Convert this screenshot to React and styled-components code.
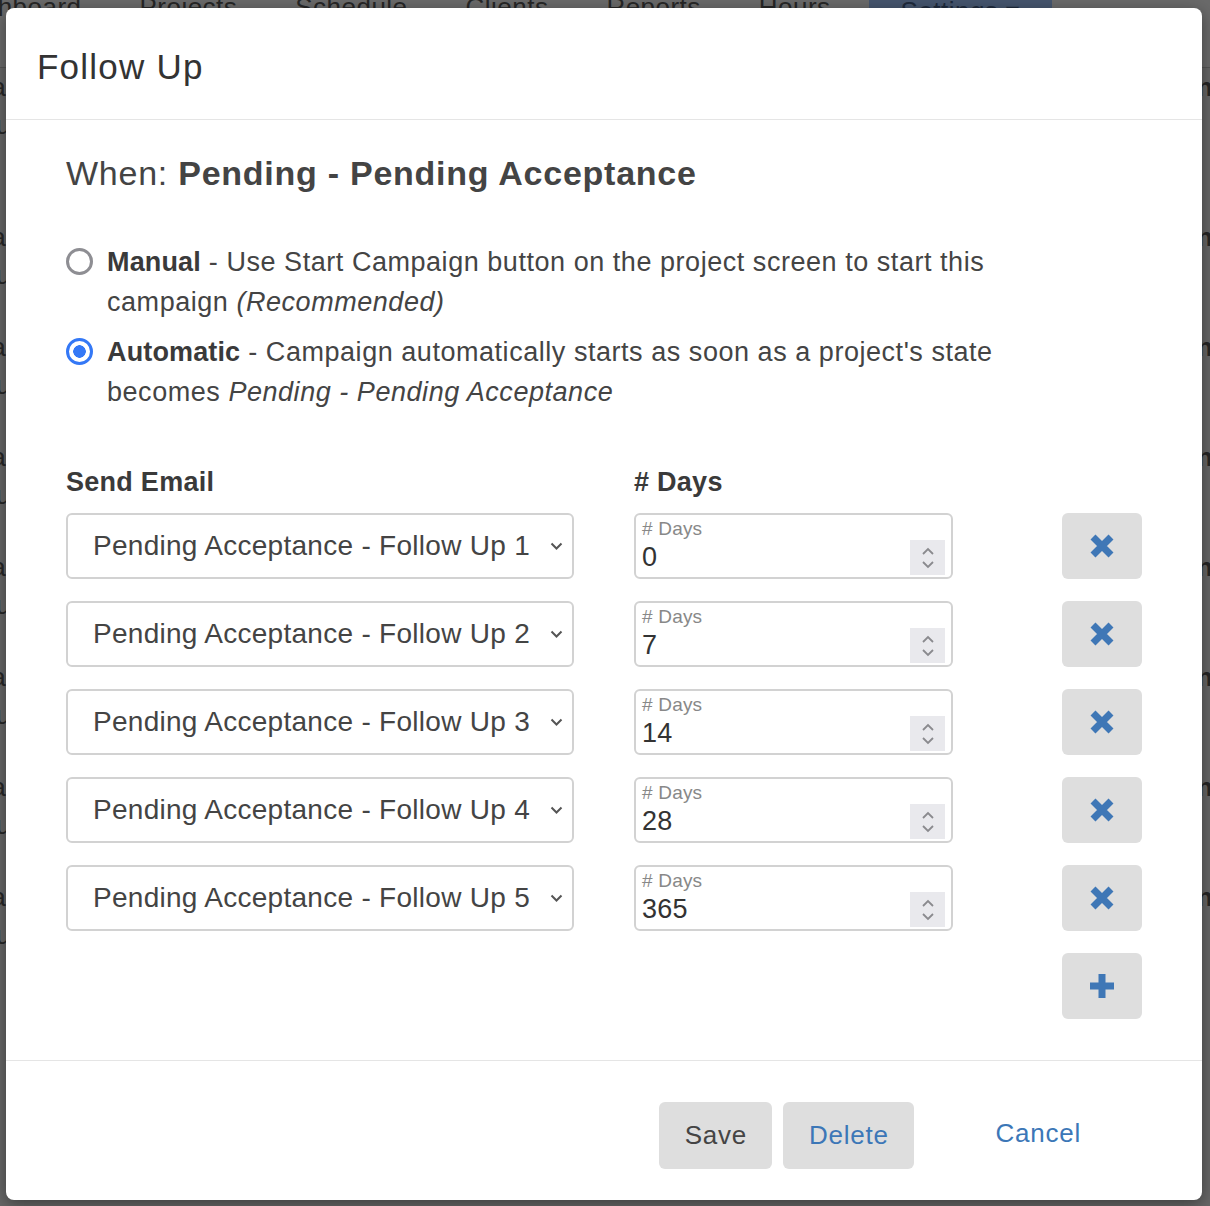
import React, { useState } from "react";
import styled, { createGlobalStyle } from "styled-components";

const GlobalStyle = createGlobalStyle`
	* { box-sizing: border-box; }
	body {
		margin: 0;
		font-family: "Liberation Sans", Arial, sans-serif;
		letter-spacing: 0.03em;
		background: #666;
		color: #444;
	}
`;

const steps = [
	{ id: 1, days: "0" },
	{ id: 2, days: "7" },
	{ id: 3, days: "14" },
	{ id: 4, days: "28" },
	{ id: 5, days: "365" },
];

const navItems = ["Dashboard", "Projects", "Schedule", "Clients", "Reports", "Hours"];

const ChevronDown = () => (
	<svg width="13" height="8" viewBox="0 0 13 8">
		<polyline points="1.5,1.5 6.5,6.5 11.5,1.5" fill="none" stroke="#555" strokeWidth="2" />
	</svg>
);

const TimesIcon = () => (
	<svg width="26" height="26" viewBox="0 0 26 26">
		<path d="M4 4 L22 22 M22 4 L4 22" stroke="#3f77b6" strokeWidth="7" />
	</svg>
);

const PlusIcon = () => (
	<svg width="28" height="28" viewBox="0 0 28 28">
		<path d="M14 2 V26 M2 14 H26" stroke="#3f77b6" strokeWidth="7" />
	</svg>
);

const App = () => {
	const [mode, setMode] = useState("automatic");

	return (
		<>
			<GlobalStyle />
			<Page>
				<Backdrop>
					<Nav>
						{navItems.map((item) => (
							<NavItem key={item}>{item}</NavItem>
						))}
						<NavActive>Settings ▾</NavActive>
					</Nav>
					{[0, 1, 2, 3, 4, 5, 6, 7].map((i) => (
						<BackRow key={i}>
							<BackLeft>
								<span>Campaign</span>
								<span>Schedule</span>
							</BackLeft>
							<BackRight>Pending</BackRight>
						</BackRow>
					))}
				</Backdrop>

				<Modal>
					<Header>
						<Title>Follow Up</Title>
					</Header>

					<Body>
						<When>
							When: <strong>Pending - Pending Acceptance</strong>
						</When>

						<Options>
							<Option onClick={() => setMode("manual")}>
								<Radio $checked={mode === "manual"} />
								<OptionText>
									<b>Manual</b> - Use Start Campaign button on the project screen
									to start this campaign <i>(Recommended)</i>
								</OptionText>
							</Option>
							<Option onClick={() => setMode("automatic")}>
								<Radio $checked={mode === "automatic"} />
								<OptionText>
									<b>Automatic</b> - Campaign automatically starts as soon as a
									project's state becomes <i>Pending - Pending Acceptance</i>
								</OptionText>
							</Option>
						</Options>

						<Labels>
							<span>Send Email</span>
							<span># Days</span>
						</Labels>

						<Rows>
							{steps.map((step) => (
								<React.Fragment key={step.id}>
									<Select>
										<span>Pending Acceptance - Follow Up {step.id}</span>
										<ChevronDown />
									</Select>
									<NumberField>
										<small># Days</small>
										<span>{step.days}</span>
										<Spinner>
											<svg width="14" height="26" viewBox="0 0 14 26">
												<polyline points="2,9 7,4 12,9" fill="none" stroke="#8a8a8e" strokeWidth="1.8" />
												<polyline points="2,17 7,22 12,17" fill="none" stroke="#8a8a8e" strokeWidth="1.8" />
											</svg>
										</Spinner>
									</NumberField>
									<IconButton type="button">
										<TimesIcon />
									</IconButton>
								</React.Fragment>
							))}
							<IconButton type="button" $col={3}>
								<PlusIcon />
							</IconButton>
						</Rows>
					</Body>

					<Footer>
						<Button type="button">Save</Button>
						<Button type="button" $blue $w={131}>
							Delete
						</Button>
						<LinkButton type="button">Cancel</LinkButton>
					</Footer>
				</Modal>
			</Page>
		</>
	);
};

const Page = styled.div`
	position: relative;
	width: 1210px;
	height: 1206px;
	overflow: hidden;
	background: #666;
`;

const Backdrop = styled.div`
	display: flex;
	flex-direction: column;
	color: #262626;
	font-size: 26px;
`;

const Nav = styled.nav`
	height: 68px;
	display: flex;
	align-items: flex-start;
	gap: 58px;
	margin-left: -50px;
	border-bottom: 1px solid #555;
	background: #6a6a6a;
`;

const NavItem = styled.span`
	margin-top: -8px;
	line-height: 30px;
`;

const NavActive = styled.span`
	margin-top: -8px;
	margin-left: -20px;
	padding: 0 32px;
	line-height: 38px;
	background: #45556e;
	color: #1e2a3c;
`;

const BackRow = styled.div`
	display: flex;
	justify-content: space-between;
	padding-top: 40px;
	height: 110px;
	margin: 0 -60px 0 -80px;
	&:first-of-type {
		padding-top: 0;
	}
`;

const BackLeft = styled.div`
	display: flex;
	flex-direction: column;
	line-height: 38px;
`;

const BackRight = styled.div`
	font-weight: 700;
	line-height: 38px;
`;

const Modal = styled.div`
	position: absolute;
	top: 8px;
	left: 6px;
	width: 1196px;
	display: flex;
	flex-direction: column;
	background: #fff;
	border-radius: 8px;
	box-shadow: 0 4px 16px rgba(0, 0, 0, 0.4);
`;

const Header = styled.header`
	height: 112px;
	display: flex;
	align-items: center;
	padding: 0 31px;
	border-bottom: 1px solid #e5e5e5;
`;

const Title = styled.h1`
	margin: 6px 0 0;
	font-size: 35px;
	font-weight: 400;
	letter-spacing: 0.035em;
	color: #333;
`;

const Body = styled.section`
	padding: 33px 60px 41px;
`;

const When = styled.h2`
	margin: 0;
	font-size: 34px;
	line-height: 40px;
	font-weight: 400;
	letter-spacing: 0.022em;
	color: #444;

	strong {
		font-weight: 700;
	}
`;

const Options = styled.div`
	margin-top: 49px;
	display: flex;
	flex-direction: column;
	gap: 10px;
`;

const Option = styled.label`
	display: flex;
	align-items: flex-start;
	gap: 14px;
	cursor: pointer;
`;

const Radio = styled.span`
	flex: none;
	width: 27px;
	height: 27px;
	margin-top: 6px;
	border-radius: 50%;
	border: 3px solid ${(p) => (p.$checked ? "#3478f6" : "#8e8e93")};
	background: ${(p) =>
		p.$checked ? "radial-gradient(circle, #3478f6 0 6px, #fff 6.5px)" : "#fff"};
`;

const OptionText = styled.span`
	max-width: 930px;
	font-size: 27px;
	line-height: 40px;
	letter-spacing: 0.02em;
	color: #444;

	b {
		color: #3a3a3a;
		letter-spacing: 0.005em;
	}
`;

const Labels = styled.div`
	margin-top: 50px;
	display: grid;
	grid-template-columns: 508px 1fr;
	column-gap: 60px;
	font-size: 27px;
	line-height: 40px;
	font-weight: 700;
	letter-spacing: 0.01em;
	color: #3a3a3a;
`;

const Rows = styled.div`
	margin-top: 11px;
	display: grid;
	grid-template-columns: 508px 319px 1fr;
	grid-auto-rows: 66px;
	column-gap: 60px;
	row-gap: 22px;
`;

const Select = styled.div`
	display: flex;
	align-items: center;
	justify-content: space-between;
	padding: 0 9px 0 25px;
	border: 2px solid #d2d2d2;
	border-radius: 6px;
	font-size: 28px;
	letter-spacing: 0.01em;
	color: #444;
`;

const NumberField = styled.div`
	position: relative;
	display: flex;
	flex-direction: column;
	padding: 2px 6px;
	border: 2px solid #d2d2d2;
	border-radius: 6px;
	color: #333;

	small {
		font-size: 19px;
		line-height: 24px;
		letter-spacing: 0.01em;
		color: #888;
	}

	span {
		font-size: 27px;
		line-height: 32px;
		letter-spacing: 0.01em;
	}
`;

const Spinner = styled.div`
	position: absolute;
	right: 6px;
	bottom: 2px;
	width: 35px;
	height: 35px;
	display: flex;
	align-items: center;
	justify-content: center;
	background: #e9e9ed;
`;

const IconButton = styled.button`
	grid-column: ${(p) => p.$col || "auto"};
	justify-self: end;
	width: 80px;
	height: 66px;
	display: flex;
	align-items: center;
	justify-content: center;
	padding: 0;
	border: none;
	border-radius: 6px;
	background: #dedede;
`;

const Footer = styled.footer`
	display: flex;
	justify-content: flex-end;
	gap: 11px;
	padding: 41px 97px 31px 0;
	border-top: 1px solid #e5e5e5;
`;

const Button = styled.button`
	width: ${(p) => p.$w || 113}px;
	height: 67px;
	border: none;
	border-radius: 6px;
	background: #dedede;
	font-family: inherit;
	font-size: 26px;
	letter-spacing: 0.03em;
	color: ${(p) => (p.$blue ? "#3c77b7" : "#444")};
`;

const LinkButton = styled.button`
	margin-left: 46px;
	padding: 0 24px 4px;
	border: none;
	background: none;
	font-family: inherit;
	font-size: 26px;
	letter-spacing: 0.03em;
	color: #3c77b7;
`;

export default App;
